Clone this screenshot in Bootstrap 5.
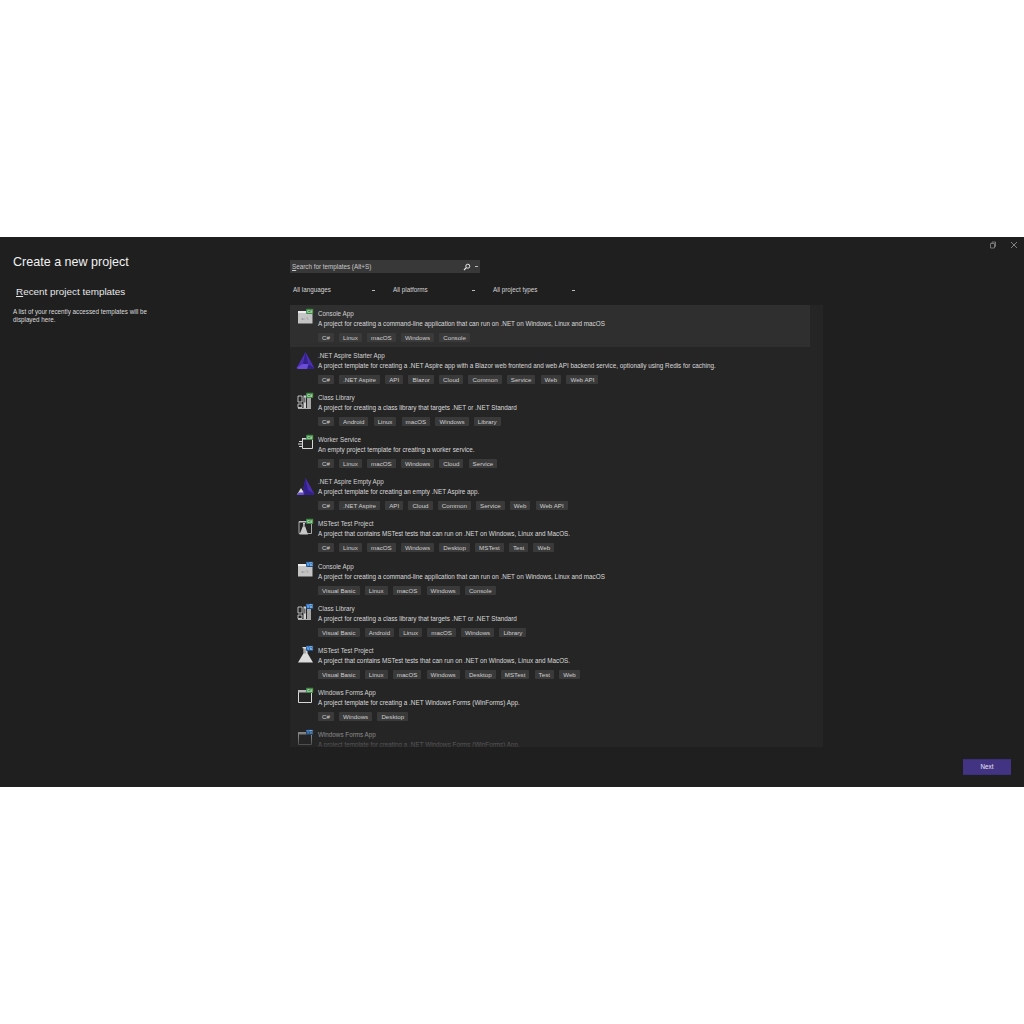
<!DOCTYPE html>
<html lang="en">
<head>
<meta charset="utf-8">
<title>Create a new project</title>
<link href="https://cdn.jsdelivr.net/npm/bootstrap@5.3.0/dist/css/bootstrap.min.css" rel="stylesheet">
<style>
html,body{height:100%;margin:0;background:#fff}
body{font-family:"Liberation Sans",Arial,sans-serif;color:#f1f1f1}
.vs-window{width:1024px;height:550px;background:#1f1f1f}
.vs-side{width:290px;flex:none}
.vs-h1{font-size:12.560px;line-height:18px;margin:0;padding:16px 0 0 13px;font-weight:400;color:#f1f1f1}
.vs-h2{font-size:9.900px;line-height:14px;margin:0;padding:14px 0 0 16px;font-weight:400;color:#e8e8e8}
.vs-h2 u,.vs-search u{text-underline-offset:1px}
.vs-note{font-size:6.270px;line-height:8px;margin:0;padding:9px 0 0 13px;width:160px;color:#dcdcdc}
.vs-main{width:533px;flex:none;padding-top:23px}
.vs-search{width:190px;height:13px;background:#383838;padding:0 2px;font-size:6.300px;color:#c8c8c8}
.vs-filters{height:32px;width:300px;padding-top:2px}
.vs-filter{width:100px;flex:none;font-size:6.300px;color:#d4d4d4;padding:0 4px 0 3px}
.vs-caret{width:3px;height:1px;background:#bbb;margin-right:11px}
.vs-list{width:533px;height:442px;background:#252525;overflow:hidden;position:relative}
.vs-fade{position:absolute;left:0;right:0;bottom:0;height:16px;background:linear-gradient(to bottom,rgba(37,37,37,.3),rgba(37,37,37,.85))}
.vs-row{width:520px;height:42.100px;padding:4px 0 0 6px;flex:none}
.vs-row.vs-active{background:#2f2f2f}
.vs-ico{width:22px;flex:none}
.vs-ico svg{display:block;width:19px;height:19px;margin-top:0}
.vs-ico.position-relative svg{margin-top:-2px}
.vs-name{font-size:6.300px;line-height:10px;color:#d2d2d2;height:10px;white-space:nowrap}
.vs-desc{font-size:6.330px;line-height:10px;color:#dadada;height:10px;white-space:nowrap}
.vs-tags{gap:5.200px;margin-top:4px}
.vs-tag{height:9px;line-height:9px;padding:0 4px;background:#3a3a3a;font-size:6.200px;color:#cfcfcf;border-radius:1px;white-space:nowrap}
.vs-next{width:48px;height:16px;background:#433483;border:0;border-top:1px solid #38307a;border-bottom:1px solid #38307a;font-size:6.300px;line-height:14px;color:#e8e4f7;padding:0;margin:0 13px 12px 0}
.vs-ctl{top:4px;right:6px;gap:13px}
.vs-ctl svg{width:8px;height:8px;display:block}
</style>
</head>
<body class="d-flex align-items-center">
<svg width="0" height="0" class="position-absolute">
 <defs>
  <symbol id="b-cs" viewBox="0 0 8 6"><rect width="8" height="6" rx="1" fill="#3f8a45"/><text x="4" y="4.800" font-size="4.500" text-anchor="middle" fill="#e4f7e4" font-family="Liberation Sans" font-weight="700">C#</text></symbol>
  <symbol id="b-vb" viewBox="0 0 8 6"><rect width="8" height="6" rx="1" fill="#1d4f8a"/><text x="4" y="5" font-size="5" text-anchor="middle" fill="#8fcbff" font-family="Liberation Sans" font-weight="700">VB</text></symbol>
  <symbol id="i-aspire" viewBox="0 0 19 19"><path d="M9.500 1 18.500 17c-1 .9-2 1-3 1H3.500c-1 0-2-.1-3-1z" fill="#4b2fb0"/><path d="M9.500 1 12 13l6.500 4c-1 .9-2 1-3 1H6z" fill="#33218a"/><path d="M.5 17l6-4h6l-1.500 5H3.500c-1 0-2-.1-3-1z" fill="#6a4cd6"/></symbol>
  <symbol id="i-aspire2" viewBox="0 0 19 19"><path d="M9.500 1 18.500 17c-1 .9-2 1-3 1H6z" fill="#4b2fb0"/><path d="M9.500 1 12 13l6.500 4c-1 .9-2 1-3 1H6z" fill="#33218a"/><path d="M1 17.500 5 11l2.500 4-2 2.800H2z" fill="#ddd"/><path d="M.5 18h7l1-2.500H3z" fill="#6a4cd6"/></symbol>
  <symbol id="i-console" viewBox="0 0 19 19"><rect x="2" y="4" width="14.500" height="12.500" fill="#c4c4c4"/><rect x="2" y="4" width="14.500" height="2" fill="#ececec"/><text x="9" y="12.500" font-size="3.800" text-anchor="middle" fill="#666" font-family="Liberation Mono">C:\</text></symbol>
  <symbol id="i-lib" viewBox="0 0 19 19"><path d="M2 5h4v6H2zM2 13h4v3.500H2z" fill="none" stroke="#cfcfcf" stroke-width=".9"/><rect x="7.500" y="4.500" width="2.500" height="12.500" fill="#cfcfcf"/><rect x="11" y="5.500" width="4" height="11.500" fill="#a5a5a5"/><rect x="8" y="6.500" width="1.500" height="5" fill="#666"/><rect x="2" y="17" width="13" height=".8" fill="#cfcfcf"/></symbol>
  <symbol id="i-worker" viewBox="0 0 19 19"><path d="M6.500 5.500h10v10h-10z" fill="none" stroke="#d6d6d6" stroke-width="1"/><rect x="6" y="5" width="11" height="1.500" fill="#d6d6d6"/><path d="M3 8.500h3M2 11h4M3 13.500h3" stroke="#d6d6d6" stroke-width="1"/></symbol>
  <symbol id="i-mstest" viewBox="0 0 19 19"><path d="M3 4.500h12.500v12H3z" fill="none" stroke="#a8a8a8" stroke-width="1"/><rect x="3" y="4" width="12.500" height="1.500" fill="#c0c0c0"/><path d="M7 6v3l-3.500 8.500h8.500L9 9V6z" fill="#c8c8c8"/><path d="M7.700 7h.8v3h-.8z" fill="#555"/></symbol>
  <symbol id="i-flask" viewBox="0 0 19 19"><path d="M6.500 3h6v1.200h-1v5l5.500 9.300H2l5.500-9.300v-5h-1z" fill="#dcdcdc"/><path d="M8.500 4.500h1v5h-1z" fill="#777"/></symbol>
  <symbol id="i-form" viewBox="0 0 19 19"><path d="M2.500 5.500h13v11h-13z" fill="none" stroke="#d8d8d8" stroke-width="1"/><rect x="2" y="4" width="14" height="2.500" fill="#b8b8b8"/></symbol>
 </defs>
</svg>
<div class="vs-window d-flex position-relative">
 <div class="position-absolute d-flex vs-ctl">
  <svg viewBox="0 0 8 8"><path d="M1.500 2.500h4v4.500h-4zM3 2.500V1h3.500v4.500H5.500" fill="none" stroke="#8a8a8a" stroke-width=".8"/></svg>
  <svg viewBox="0 0 8 8"><path d="M1 1l6 6M7 1 1 7" stroke="#9a9a9a" stroke-width=".8"/></svg>
 </div>
 <aside class="vs-side">
  <h1 class="vs-h1">Create a new project</h1>
  <h2 class="vs-h2"><u>R</u>ecent project templates</h2>
  <p class="vs-note">A list of your recently accessed templates will be displayed here.</p>
 </aside>
 <main class="vs-main d-flex flex-column">
  <div class="vs-search d-flex align-items-center justify-content-between">
   <span><u>S</u>earch for templates (Alt+S)</span>
   <span class="d-flex align-items-center gap-1">
    <svg width="8" height="8" viewBox="0 0 8 8"><circle cx="4.800" cy="3.200" r="2" fill="none" stroke="#e8e8e8" stroke-width="1"/><path d="M3.300 4.700 1 7" stroke="#e8e8e8" stroke-width="1.200"/></svg>
    <span class="d-block vs-caret m-0"></span>
   </span>
  </div>
  <div class="vs-filters d-flex align-items-center">
   <div class="vs-filter d-flex align-items-center justify-content-between"><span>All languages</span><span class="vs-caret"></span></div>
   <div class="vs-filter d-flex align-items-center justify-content-between"><span>All platforms</span><span class="vs-caret"></span></div>
   <div class="vs-filter d-flex align-items-center justify-content-between"><span>All project types</span><span class="vs-caret"></span></div>
  </div>
  <div class="vs-list d-flex flex-column">
   <div class="vs-row vs-active d-flex">
    <div class="vs-ico position-relative"><svg><use href="#i-console"/></svg><svg class="position-absolute top-0 start-0" viewBox="0 0 19 19"><use href="#b-cs" x="10" y="1.500" width="7.500" height="5.500"/></svg></div>
    <div><div class="vs-name">Console App</div><div class="vs-desc">A project for creating a command-line application that can run on .NET on Windows, Linux and macOS</div>
    <div class="vs-tags d-flex"><span class="vs-tag">C#</span><span class="vs-tag">Linux</span><span class="vs-tag">macOS</span><span class="vs-tag">Windows</span><span class="vs-tag">Console</span></div></div>
   </div>
   <div class="vs-row d-flex">
    <div class="vs-ico"><svg><use href="#i-aspire"/></svg></div>
    <div><div class="vs-name">.NET Aspire Starter App</div><div class="vs-desc">A project template for creating a .NET Aspire app with a Blazor web frontend and web API backend service, optionally using Redis for caching.</div>
    <div class="vs-tags d-flex"><span class="vs-tag">C#</span><span class="vs-tag">.NET Aspire</span><span class="vs-tag">API</span><span class="vs-tag">Blazor</span><span class="vs-tag">Cloud</span><span class="vs-tag">Common</span><span class="vs-tag">Service</span><span class="vs-tag">Web</span><span class="vs-tag">Web API</span></div></div>
   </div>
   <div class="vs-row d-flex">
    <div class="vs-ico position-relative"><svg><use href="#i-lib"/></svg><svg class="position-absolute top-0 start-0" viewBox="0 0 19 19"><use href="#b-cs" x="10" y="1.500" width="7.500" height="5.500"/></svg></div>
    <div><div class="vs-name">Class Library</div><div class="vs-desc">A project for creating a class library that targets .NET or .NET Standard</div>
    <div class="vs-tags d-flex"><span class="vs-tag">C#</span><span class="vs-tag">Android</span><span class="vs-tag">Linux</span><span class="vs-tag">macOS</span><span class="vs-tag">Windows</span><span class="vs-tag">Library</span></div></div>
   </div>
   <div class="vs-row d-flex">
    <div class="vs-ico position-relative"><svg><use href="#i-worker"/></svg><svg class="position-absolute top-0 start-0" viewBox="0 0 19 19"><use href="#b-cs" x="10" y="1.500" width="7.500" height="5.500"/></svg></div>
    <div><div class="vs-name">Worker Service</div><div class="vs-desc">An empty project template for creating a worker service.</div>
    <div class="vs-tags d-flex"><span class="vs-tag">C#</span><span class="vs-tag">Linux</span><span class="vs-tag">macOS</span><span class="vs-tag">Windows</span><span class="vs-tag">Cloud</span><span class="vs-tag">Service</span></div></div>
   </div>
   <div class="vs-row d-flex">
    <div class="vs-ico"><svg><use href="#i-aspire2"/></svg></div>
    <div><div class="vs-name">.NET Aspire Empty App</div><div class="vs-desc">A project template for creating an empty .NET Aspire app.</div>
    <div class="vs-tags d-flex"><span class="vs-tag">C#</span><span class="vs-tag">.NET Aspire</span><span class="vs-tag">API</span><span class="vs-tag">Cloud</span><span class="vs-tag">Common</span><span class="vs-tag">Service</span><span class="vs-tag">Web</span><span class="vs-tag">Web API</span></div></div>
   </div>
   <div class="vs-row d-flex">
    <div class="vs-ico position-relative"><svg><use href="#i-mstest"/></svg><svg class="position-absolute top-0 start-0" viewBox="0 0 19 19"><use href="#b-cs" x="10" y="1.500" width="7.500" height="5.500"/></svg></div>
    <div><div class="vs-name">MSTest Test Project</div><div class="vs-desc">A project that contains MSTest tests that can run on .NET on Windows, Linux and MacOS.</div>
    <div class="vs-tags d-flex"><span class="vs-tag">C#</span><span class="vs-tag">Linux</span><span class="vs-tag">macOS</span><span class="vs-tag">Windows</span><span class="vs-tag">Desktop</span><span class="vs-tag">MSTest</span><span class="vs-tag">Test</span><span class="vs-tag">Web</span></div></div>
   </div>
   <div class="vs-row d-flex">
    <div class="vs-ico position-relative"><svg><use href="#i-console"/></svg><svg class="position-absolute top-0 start-0" viewBox="0 0 19 19"><use href="#b-vb" x="10" y="1.500" width="7.500" height="5.500"/></svg></div>
    <div><div class="vs-name">Console App</div><div class="vs-desc">A project for creating a command-line application that can run on .NET on Windows, Linux and macOS</div>
    <div class="vs-tags d-flex"><span class="vs-tag">Visual Basic</span><span class="vs-tag">Linux</span><span class="vs-tag">macOS</span><span class="vs-tag">Windows</span><span class="vs-tag">Console</span></div></div>
   </div>
   <div class="vs-row d-flex">
    <div class="vs-ico position-relative"><svg><use href="#i-lib"/></svg><svg class="position-absolute top-0 start-0" viewBox="0 0 19 19"><use href="#b-vb" x="10" y="1.500" width="7.500" height="5.500"/></svg></div>
    <div><div class="vs-name">Class Library</div><div class="vs-desc">A project for creating a class library that targets .NET or .NET Standard</div>
    <div class="vs-tags d-flex"><span class="vs-tag">Visual Basic</span><span class="vs-tag">Android</span><span class="vs-tag">Linux</span><span class="vs-tag">macOS</span><span class="vs-tag">Windows</span><span class="vs-tag">Library</span></div></div>
   </div>
   <div class="vs-row d-flex">
    <div class="vs-ico position-relative"><svg><use href="#i-flask"/></svg><svg class="position-absolute top-0 start-0" viewBox="0 0 19 19"><use href="#b-vb" x="10" y="1.500" width="7.500" height="5.500"/></svg></div>
    <div><div class="vs-name">MSTest Test Project</div><div class="vs-desc">A project that contains MSTest tests that can run on .NET on Windows, Linux and MacOS.</div>
    <div class="vs-tags d-flex"><span class="vs-tag">Visual Basic</span><span class="vs-tag">Linux</span><span class="vs-tag">macOS</span><span class="vs-tag">Windows</span><span class="vs-tag">Desktop</span><span class="vs-tag">MSTest</span><span class="vs-tag">Test</span><span class="vs-tag">Web</span></div></div>
   </div>
   <div class="vs-row d-flex">
    <div class="vs-ico position-relative"><svg><use href="#i-form"/></svg><svg class="position-absolute top-0 start-0" viewBox="0 0 19 19"><use href="#b-cs" x="10" y="1.500" width="7.500" height="5.500"/></svg></div>
    <div><div class="vs-name">Windows Forms App</div><div class="vs-desc">A project template for creating a .NET Windows Forms (WinForms) App.</div>
    <div class="vs-tags d-flex"><span class="vs-tag">C#</span><span class="vs-tag">Windows</span><span class="vs-tag">Desktop</span></div></div>
   </div>
   <div class="vs-row d-flex">
    <div class="vs-ico position-relative"><svg><use href="#i-form"/></svg><svg class="position-absolute top-0 start-0" viewBox="0 0 19 19"><use href="#b-vb" x="10" y="1.500" width="7.500" height="5.500"/></svg></div>
    <div><div class="vs-name">Windows Forms App</div><div class="vs-desc">A project template for creating a .NET Windows Forms (WinForms) App.</div></div>
   </div>
   <div class="vs-fade"></div>
  </div>
 </main>
 <div class="flex-grow-1 d-flex align-items-end justify-content-end"><button class="vs-next btn rounded-0" type="button">Next</button></div>
</div>
<script src="https://cdn.jsdelivr.net/npm/bootstrap@5.3.0/dist/js/bootstrap.bundle.min.js"></script>
</body>
</html>
